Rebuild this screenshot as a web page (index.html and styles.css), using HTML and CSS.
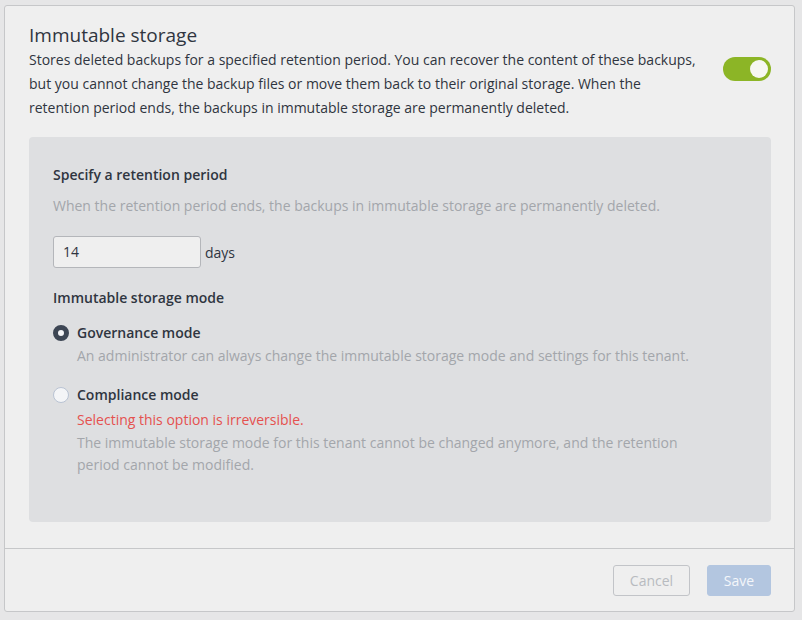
FILE: index.html
```html
<!DOCTYPE html>
<html>
<head>
<meta charset="utf-8">
<link rel="stylesheet" href="styles.css">
</head>
<body>
<div class="card">
  <div class="card-body">
    <div class="header">
      <div class="header-text">
        <h1 class="title">Immutable storage</h1>
        <p class="desc">Stores deleted backups for a specified retention period. You can recover the content of these backups, but you cannot change the backup files or move them back to their original storage. When the retention period ends, the backups in immutable storage are permanently deleted.</p>
      </div>
      <div class="toggle"><span class="knob"></span></div>
    </div>
    <div class="panel">
      <div class="label">Specify a retention period</div>
      <div class="hint">When the retention period ends, the backups in immutable storage are permanently deleted.</div>
      <div class="input-row">
        <div class="input">14</div>
        <span class="unit">days</span>
      </div>
      <div class="label mode-label">Immutable storage mode</div>
      <div class="option">
        <span class="radio checked"></span>
        <div class="option-text">
          <div class="option-title">Governance mode</div>
          <div class="option-desc">An administrator can always change the immutable storage mode and settings for this tenant.</div>
        </div>
      </div>
      <div class="option second">
        <span class="radio"></span>
        <div class="option-text">
          <div class="option-title">Compliance mode</div>
          <div class="warn">Selecting this option is irreversible.</div>
          <div class="option-desc">The immutable storage mode for this tenant cannot be changed anymore, and the retention period cannot be modified.</div>
        </div>
      </div>
    </div>
  </div>
  <div class="footer">
    <button class="btn cancel">Cancel</button>
    <button class="btn save">Save</button>
  </div>
</div>
</body>
</html>
```
FILE: styles.css
```css
html, body {
  margin: 0;
  background: #e6e6e7;
  font-family: "Open Sans", "Liberation Sans", sans-serif;
}
body {
  padding: 5px 7px 7px 4px;
}
.card {
  width: 789px;
  height: 605px;
  background: #efefef;
  border: 1px solid #c6c7c9;
  border-radius: 3px;
  display: flex;
  flex-direction: column;
}
.card-body {
  flex: 1;
  padding: 16px 23px 0 24px;
}
.header {
  display: flex;
  justify-content: space-between;
  align-items: flex-start;
}
.header-text {
  width: 670px;
}
.title {
  margin: 0;
  font-size: 19px;
  font-weight: 400;
  line-height: 26px;
  color: #2f3540;
}
.desc {
  margin: 0;
  font-size: 14px;
  line-height: 24px;
  color: #2f3540;
}
.toggle {
  margin-top: 35px;
  width: 48px;
  height: 24px;
  border-radius: 12px;
  background: #8cb526;
  position: relative;
}
.knob {
  position: absolute;
  right: 3px;
  top: 3px;
  width: 18px;
  height: 18px;
  border-radius: 50%;
  background: #f6f7f2;
}
.panel {
  margin-top: 17px;
  background: #dedfe1;
  border-radius: 4px;
  padding: 28px 24px 40px 24px;
  height: 385px;
  box-sizing: border-box;
}
.label {
  font-size: 14px;
  font-weight: 600;
  line-height: 20px;
  color: #2f3540;
}
.hint {
  margin-top: 11px;
  font-size: 14px;
  line-height: 20px;
  color: #a3a6ab;
}
.input-row {
  margin-top: 20px;
  display: flex;
  align-items: center;
  gap: 4px;
}
.input {
  width: 148px;
  height: 32px;
  box-sizing: border-box;
  border: 1px solid #b4b6ba;
  border-radius: 3px;
  background: #efefef;
  padding: 0 9px;
  font-size: 14px;
  line-height: 30px;
  color: #2f3540;
}
.unit {
  font-size: 14px;
  color: #2f3540;
}
.mode-label {
  margin-top: 20px;
}
.option {
  margin-top: 15px;
  display: flex;
  gap: 8px;
}
.option.second {
  margin-top: 18px;
}
.radio {
  flex: none;
  width: 16px;
  height: 16px;
  margin-top: 2px;
  border-radius: 50%;
  box-sizing: border-box;
  border: 1px solid #b9c3d3;
  background: #f4f5f7;
}
.radio.checked {
  border: 5px solid #3d4654;
  background: #f4f5f7;
}
.option-title {
  font-size: 14px;
  font-weight: 600;
  line-height: 20px;
  color: #2f3540;
}
.option-desc {
  margin-top: 2px;
  font-size: 14px;
  line-height: 22px;
  color: #a3a6ab;
  max-width: 630px;
}
.warn {
  margin-top: 5px;
  font-size: 14px;
  line-height: 20px;
  color: #e5514f;
}
.footer {
  border-top: 1px solid #c6c7c9;
  height: 63px;
  box-sizing: border-box;
  padding: 16px 23px 0 0;
  display: flex;
  justify-content: flex-end;
  gap: 17px;
}
.btn {
  height: 31px;
  box-sizing: border-box;
  border-radius: 3px;
  font-family: inherit;
  font-size: 14px;
  padding: 0;
}
.cancel {
  width: 77px;
  background: transparent;
  border: 1px solid #c2c4c8;
  color: #b8bbc0;
}
.save {
  width: 64px;
  background: #b3c6e0;
  border: 1px solid #b3c6e0;
  color: #f4f6fa;
}
```
